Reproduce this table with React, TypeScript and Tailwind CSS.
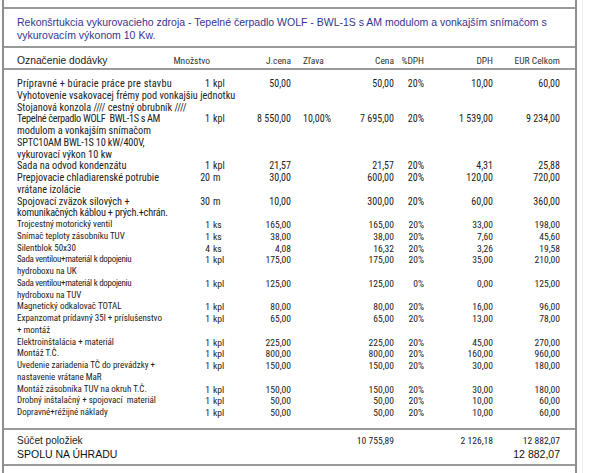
import React from "react";

type Row = {
  d: string[];
  q?: string;
  u?: string;
  j?: string;
  z?: string;
  c?: string;
  p?: string;
  dph?: string;
  e?: string;
  t?: string[];
};

const rows: Row[] = [
  { d: ["Prípravné + búracie práce pre stavbu"], t: ["tracking-[0.2px]"], q: "1", u: "kpl", j: "50,00", c: "50,00", p: "20%", dph: "10,00", e: "60,00" },
  { d: ["Vyhotovenie vsakovacej frémy pod vonkajšiu jednotku"] },
  { d: ["Stojanová konzola //// cestný obrubník ////"] },
  {
    d: ["Tepelné čerpadlo WOLF  BWL-1S s AM", "modulom a vonkajším snímačom", "SPTC10AM BWL-1S 10 kW/400V,", "vykurovací výkon 10 kw"],
    t: ["tracking-[-0.35px]", "", "tracking-[-0.2px]", ""],
    q: "1", u: "kpl", j: "8 550,00", z: "10,00%", c: "7 695,00", p: "20%", dph: "1 539,00", e: "9 234,00",
  },
  { d: ["Sada na odvod kondenzátu"], q: "1", u: "kpl", j: "21,57", c: "21,57", p: "20%", dph: "4,31", e: "25,88" },
  { d: ["Prepjovacie chladiarenské potrubie", "vrátane izolácie"], q: "20", u: "m", j: "30,00", c: "600,00", p: "20%", dph: "120,00", e: "720,00" },
  { d: ["Spojovací zväzok silových +", "komunikačných káblou + prých.+chrán."], t: ["", "tracking-[-0.2px]"], q: "30", u: "m", j: "10,00", c: "300,00", p: "20%", dph: "60,00", e: "360,00" },
  { d: ["Trojcestný motorický ventil"], q: "1", u: "ks", j: "165,00", c: "165,00", p: "20%", dph: "33,00", e: "198,00" },
  { d: ["Snímač teploty zásobníku TUV"], q: "1", u: "ks", j: "38,00", c: "38,00", p: "20%", dph: "7,60", e: "45,60" },
  { d: ["Silentblok 50x30"], q: "4", u: "ks", j: "4,08", c: "16,32", p: "20%", dph: "3,26", e: "19,58" },
  { d: ["Sada ventilou+materiál k dopojeniu", "hydroboxu na UK"], t: ["tracking-[-0.3px]", ""], q: "1", u: "kpl", j: "175,00", c: "175,00", p: "20%", dph: "35,00", e: "210,00" },
  { d: ["Sada ventilou+materiál k dopojeniu", "hydroboxu na TUV"], t: ["tracking-[-0.3px]", ""], q: "1", u: "kpl", j: "125,00", c: "125,00", p: "0%", dph: "0,00", e: "125,00" },
  { d: ["Magnetický odkalovač TOTAL"], q: "1", u: "kpl", j: "80,00", c: "80,00", p: "20%", dph: "16,00", e: "96,00" },
  { d: ["Expanzomat prídavný 35l + príslušenstvo", "+ montáž"], q: "1", u: "kpl", j: "65,00", c: "65,00", p: "20%", dph: "13,00", e: "78,00" },
  { d: ["Elektroinštalácia + materiál"], q: "1", u: "kpl", j: "225,00", c: "225,00", p: "20%", dph: "45,00", e: "270,00" },
  { d: ["Montáž T.Č."], q: "1", u: "kpl", j: "800,00", c: "800,00", p: "20%", dph: "160,00", e: "960,00" },
  { d: ["Uvedenie zariadenia TČ do prevádzky +", "nastavenie vrátane MaR"], q: "1", u: "kpl", j: "150,00", c: "150,00", p: "20%", dph: "30,00", e: "180,00" },
  { d: ["Montáž zásobníka TUV na okruh T.Č."], q: "1", u: "kpl", j: "150,00", c: "150,00", p: "20%", dph: "30,00", e: "180,00" },
  { d: ["Drobný inštalačný + spojovací  materiál"], q: "1", u: "kpl", j: "50,00", c: "50,00", p: "20%", dph: "10,00", e: "60,00" },
  { d: ["Dopravné+réžijné náklady"], q: "1", u: "kpl", j: "50,00", c: "50,00", p: "20%", dph: "10,00", e: "60,00" },
];

const grid = "grid grid-cols-[179px_14px_30px_51px_49px_54px_30px_69px_67px]";
const RC = "font-['Roboto_Condensed','Liberation_Sans',sans-serif]";
const LS = "font-['Liberation_Sans',Arial,sans-serif]";

function R({ children }: { children?: React.ReactNode }) {
  return <div className="flex justify-end whitespace-nowrap">{children}</div>;
}

export default function App() {
  return (
    <div className={`w-[600px] h-[473px] bg-white overflow-hidden flex ${RC} text-[#222]`}>
      <div className="ml-[2px] w-[575px] h-full border-x-2 border-[#8e8e8e] flex flex-col">
        <div className="h-[9px] shrink-0 border-b-2 border-[#9a9a9a]" />
        <div className={`h-[39px] shrink-0 border-b-2 border-[#9a9a9a] pl-[13px] pt-[7px] ${LS} text-[10.5px] leading-[13px] text-[#35358f]`}>
          <div className="whitespace-nowrap">
            Rekonšrtukcia vykurovacieho zdroja - Tepelné čerpadlo WOLF - BWL-1S s AM modulom a vonkajším snímačom s
          </div>
          <div className="whitespace-nowrap">vykurovacím výkonom 10 Kw.</div>
        </div>
        <div className={`${grid} h-[22px] shrink-0 border-b-2 border-[#9a9a9a] pl-[13px] pt-[6px] text-[9.5px] leading-[12px] items-center text-[#333]`}>
          <div className={`${LS} text-[10.3px] whitespace-nowrap text-[#222]`}>Označenie dodávky</div>
          <R>Množstvo</R>
          <div />
          <R>J.cena</R>
          <div className="pl-[12px]">Zľava</div>
          <R>Cena</R>
          <R>%DPH</R>
          <R>DPH</R>
          <R>EUR Celkom</R>
        </div>
        <div className="h-[360px] shrink-0 border-b-2 border-[#9a9a9a] pl-[13px] pt-[8px] leading-[11.75px]">
          {rows.map((r, i) => {
            const upper = i < 7;
            const dsz = upper ? "text-[10.3px]" : "text-[9px]";
            const nsz = upper ? "text-[10px]" : "text-[9.6px]";
            return (
              <div key={i} className={`${grid} ${nsz}`}>
                <div className={`whitespace-pre ${dsz}`}>
                  {r.d.map((l, k) => (
                    <div key={k} className={r.t?.[k] ?? ""}>
                      {l}
                    </div>
                  ))}
                </div>
                <R>{r.q}</R>
                <div className="pl-[3px] whitespace-nowrap">{r.u}</div>
                <R>{r.j}</R>
                <div className="pl-[12px] whitespace-nowrap">{r.z}</div>
                <R>{r.c}</R>
                <R>{r.p}</R>
                <R>{r.dph}</R>
                <R>{r.e}</R>
              </div>
            );
          })}
        </div>
        <div className="h-[36px] shrink-0 border-b-2 border-[#9a9a9a] pl-[13px] pt-[5px]">
          <div className={`${grid} text-[9.6px] leading-[12px]`}>
            <div className={`${LS} text-[10.1px] whitespace-nowrap`}>Súčet položiek</div>
            <div />
            <div />
            <div />
            <div />
            <R>10 755,89</R>
            <div />
            <R>2 126,18</R>
            <R>12 882,07</R>
          </div>
          <div className={`${grid} ${LS} text-[10.5px] leading-[14px] text-[#111]`}>
            <div className="whitespace-nowrap">SPOLU NA ÚHRADU</div>
            <div />
            <div />
            <div />
            <div />
            <div />
            <div />
            <div />
            <R>12 882,07</R>
          </div>
        </div>
        <div className="flex-1" />
      </div>
      <div className="ml-[5px] w-px h-full bg-[#ededed]" />
    </div>
  );
}
